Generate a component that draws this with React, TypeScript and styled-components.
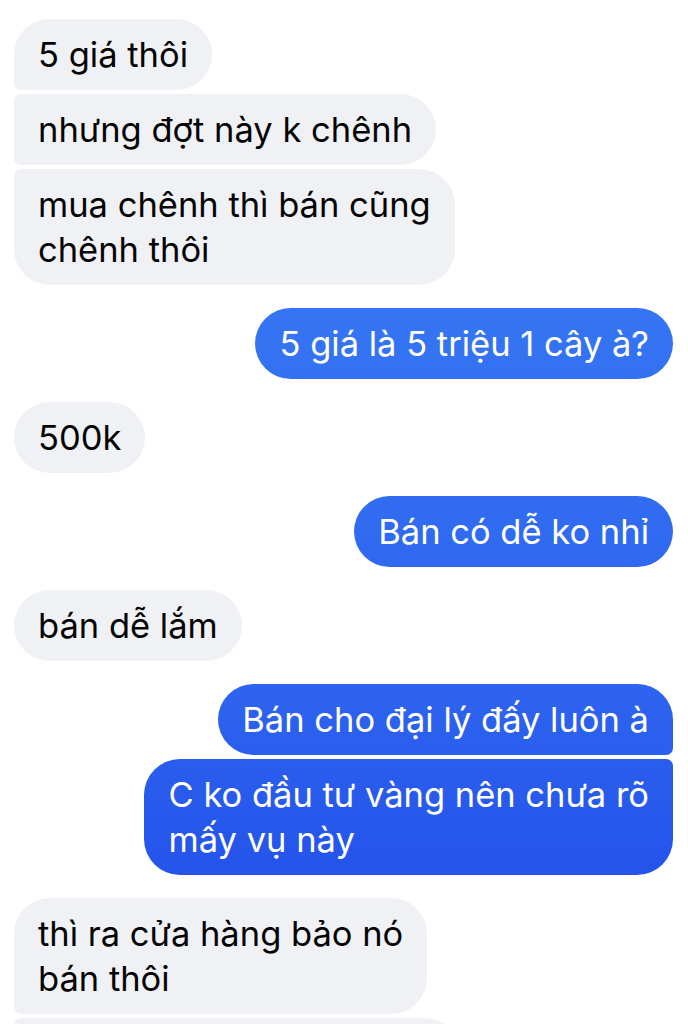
import React from "react";
import styled, { createGlobalStyle, css } from "styled-components";

const Global = createGlobalStyle`
  html, body { margin: 0; padding: 0; background: #ffffff; }
  body { font-family: "Inter", "Noto Sans", "Liberation Sans", sans-serif; -webkit-font-smoothing: antialiased; }
`;

const Thread = styled.div`
  display: flex;
  flex-direction: column;
  padding: 19px 15px 0 14px;
  height: 1024px;
  box-sizing: border-box;
  overflow: hidden;
`;

const Group = styled.div<{ $mine?: boolean }>`
  display: flex;
  flex-direction: column;
  align-items: ${(p) => (p.$mine ? "flex-end" : "flex-start")};
  gap: 4px;
  margin-bottom: 23px;
`;

type Pos = "single" | "first" | "middle" | "last";

const BIG = 36;
const SMALL = 7;

const radius = (mine: boolean, pos: Pos) => {
  const top = pos === "single" || pos === "first" ? BIG : SMALL;
  const bottom = pos === "single" || pos === "last" ? BIG : SMALL;
  return mine
    ? css`border-radius: ${BIG}px ${top}px ${bottom}px ${BIG}px;`
    : css`border-radius: ${top}px ${BIG}px ${BIG}px ${bottom}px;`;
};

const Bubble = styled.div<{ $mine?: boolean; $pos: Pos; $width?: number }>`
  box-sizing: border-box;
  padding: 13px 24px 13px 24px;
  min-height: 71px;
  font-size: 34.5px;
  line-height: 45px;
  letter-spacing: 0px;
  white-space: nowrap;
  ${(p) => (p.$width ? css`width: ${p.$width}px;` : "")}
  ${(p) => radius(!!p.$mine, p.$pos)}
  ${(p) =>
    p.$mine
      ? css`
          color: #ffffff;
          background-image: linear-gradient(
            to bottom,
            #3b84f7 0px,
            #3473f2 340px,
            #2d63ef 700px,
            #2453ea 880px,
            #1f48e5 1024px
          );
          background-attachment: fixed;
        `
      : css`
          color: #050505;
          background: #f0f1f5;
        `}
`;

type Msg = { text: string[]; width?: number };
type G = { mine?: boolean; msgs: Msg[] };

const groups: G[] = [
  {
    msgs: [
      { text: ["5 giá thôi"] },
      { text: ["nhưng đợt này k chênh"] },
      { text: ["mua chênh thì bán cũng", "chênh thôi"] },
    ],
  },
  { mine: true, msgs: [{ text: ["5 giá là 5 triệu 1 cây à?"] }] },
  { msgs: [{ text: ["500k"] }] },
  { mine: true, msgs: [{ text: ["Bán có dễ ko nhỉ"] }] },
  { msgs: [{ text: ["bán dễ lắm"] }] },
  {
    mine: true,
    msgs: [
      { text: ["Bán cho đại lý đấy luôn à"] },
      { text: ["C ko đầu tư vàng nên chưa rõ", "mấy vụ này"] },
    ],
  },
  {
    msgs: [
      { text: ["thì ra cửa hàng bảo nó", "bán thôi"] },
      { text: [], width: 446 },
    ],
  },
];

const posOf = (i: number, n: number): Pos =>
  n === 1 ? "single" : i === 0 ? "first" : i === n - 1 ? "last" : "middle";

export default function App() {
  return (
    <>
      <Global />
      <Thread>
        {groups.map((g, gi) => (
          <Group key={gi} $mine={g.mine}>
            {g.msgs.map((m, mi) => (
              <Bubble
                key={mi}
                $mine={g.mine}
                $pos={posOf(mi, g.msgs.length)}
                $width={m.width}
              >
                {m.text.map((line, li) => (
                  <React.Fragment key={li}>
                    {li > 0 && <br />}
                    {line}
                  </React.Fragment>
                ))}
              </Bubble>
            ))}
          </Group>
        ))}
      </Thread>
    </>
  );
}
